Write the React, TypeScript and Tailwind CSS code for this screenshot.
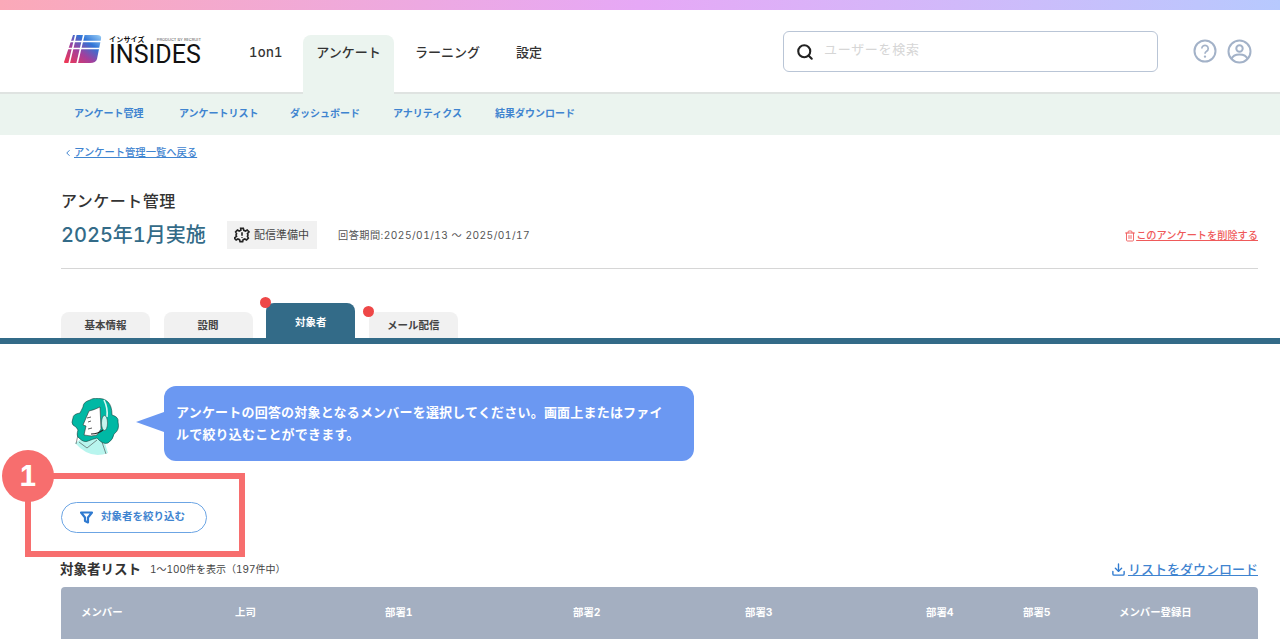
import { ChevronLeft, Download, Search, Trash2 } from "lucide-react";

const subNav = [
  { label: "アンケート管理", className: "w-[105px]" },
  { label: "アンケートリスト", className: "w-[111px]" },
  { label: "ダッシュボード", className: "w-[103px]" },
  { label: "アナリティクス", className: "w-[102px]" },
  { label: "結果ダウンロード", className: "w-[90px]" },
];

const columns = ["メンバー", "上司", "部署1", "部署2", "部署3", "部署4", "部署5", "メンバー登録日"];

const Logo = () => (
  <div className="flex items-center w-[188px] shrink-0 pb-[4px]">
    <svg width="38" height="29" viewBox="0 0 38 29" className="ml-[3px]">
      <defs>
        <linearGradient id="logoFill" x1="0" y1="1" x2="1" y2="0">
          <stop offset="0" stopColor="#f5364f" />
          <stop offset="0.4" stopColor="#a33f9c" />
          <stop offset="0.7" stopColor="#2f74d6" />
          <stop offset="1" stopColor="#9bd0f7" />
        </linearGradient>
      </defs>
      <path d="M9 0H33Q38 0 37 4L33 24Q32 28 26 28H1Q0 28 0 27Z" fill="url(#logoFill)" />
      <path d="M12 -1L5 29M20 -1L13 29" stroke="#fff" strokeWidth="1.6" />
      <path d="M6 6.5H38M4 13.5H38" stroke="#fff" strokeWidth="1.4" />
    </svg>
    <div className="ml-[7px] w-[92px]">
      <div className="flex items-center justify-between h-[9px] mb-[2px]">
        <span className="text-[7px] leading-[9px] font-bold tracking-[0.2px] text-[#111]">インサイズ</span>
        <span className="text-[4px] leading-[9px] text-[#555] whitespace-nowrap">PRODUCT BY RECRUIT</span>
      </div>
      <div className="text-[25px] leading-[18px] text-[#111] font-['Roboto',sans-serif]">INSIDES</div>
    </div>
  </div>
);

const Agent = () => (
  <svg width="50" height="60" viewBox="0 0 50 60" className="ml-[9px] mt-[12px] shrink-0">
    <path d="M5 45Q20 62 38 55L34 42L16 38Z" fill="#b8f5ee" />
    <path d="M6 46L9 32M36 56L30 38M9 44L17 50L27 42" fill="none" stroke="#444" strokeWidth="0.6" />
    <path
      d="M33 1Q24 -1 20 2Q13 4 13 9Q11 13 10 15Q3 16 3 20Q1 25 3 27Q7 29 8 32Q6 38 9 40Q14 45 18 43Q23 41 27 40Q33 47 38 45Q43 42 44 36Q50 32 48 24Q49 19 42 17Q42 8 38 4Q36 2 33 1Z"
      fill="#00b8a4"
      stroke="#16413c"
      strokeWidth="0.6"
    />
    <path d="M19 13Q24 12 30 9L31 31L27 37Q22 39 14 37L16 28L13 27Z" fill="#fff" stroke="#333" strokeWidth="0.6" />
    <path d="M17 20L21 19M18 24L21 23M18 31L22 30" stroke="#333" strokeWidth="0.8" />
    <path d="M34 2Q38 10 37 19" fill="none" stroke="#d8f8f4" strokeWidth="1.6" />
    <ellipse cx="34.5" cy="25" rx="3" ry="7.5" fill="#c6f5ef" stroke="#333" strokeWidth="0.5" />
    <path d="M33 32Q28 36 21 36" fill="none" stroke="#222" strokeWidth="1.1" />
  </svg>
);

export default function App() {
  return (
    <div className="relative h-[639px] w-[1280px] overflow-hidden bg-white text-[#333] tabular-nums font-['Inter','Noto_Sans_CJK_JP',sans-serif]">
      <div className="h-[10px] bg-gradient-to-r from-[#fba9b8] via-[#e6a8f6] to-[#b7c9fe]" />

      {/* Header */}
      <header className="flex h-[84px] items-stretch border-b-2 border-[#dfe3e1] pl-[61px] pr-[27px]">
        <Logo />
        <nav className="flex text-[13px] font-medium text-[#333]">
          <a className="flex items-center pt-[3px] w-[54px] tracking-[0.3px]">1on1</a>
          <a className="mt-[25px] mb-[-2px] flex w-[91px] justify-center rounded-t-lg bg-[#ebf4ef] pt-[8px]">アンケート</a>
          <a className="flex items-center pt-[3px] ml-[21px] w-[101px]">ラーニング</a>
          <a className="flex items-center pt-[3px]">設定</a>
        </nav>
        <div className="ml-[241px] mt-[21px] flex h-[41px] w-[375px] items-center rounded-md border border-[#b9c5d6] pl-[12px]">
          <Search className="h-[18px] w-[18px] text-[#222]" strokeWidth={2.8} />
          <span className="ml-[10px] pb-[3px] text-[13px] tracking-[0.7px] text-[#d6d6d6]">ユーザーを検索</span>
        </div>
        <div className="ml-[35px] flex items-center gap-[10px]">
          <svg width="24" height="24" viewBox="0 0 24 24" fill="none" stroke="#a3b2c8" strokeWidth="2">
            <circle cx="12" cy="12" r="10.5" />
            <path d="M8.8 9.500a3.200 3.200 0 1 1 4.800 2.800c-1 .6-1.600 1.200-1.600 2.400" strokeWidth="1.700" />
            <circle cx="12" cy="17.600" r="0.6" strokeWidth="1.200" />
          </svg>
          <svg width="25" height="25" viewBox="0 0 25 25" fill="none" stroke="#a3b2c8" strokeWidth="2">
            <circle cx="12.500" cy="12.500" r="11" />
            <circle cx="12.500" cy="9.500" r="3.200" />
            <path d="M4.500 20Q6 15.500 12.500 15.500T20.500 20" />
          </svg>
        </div>
      </header>

      {/* Sub navigation */}
      <div className="flex h-[41px] items-center bg-[#ebf4ef] pb-[3px] pl-[74px] text-[10px] font-bold text-[#3f84d0]">
        {subNav.map((item) => (
          <a key={item.label} className={`${item.className} whitespace-nowrap`}>
            {item.label}
          </a>
        ))}
      </div>

      <main className="pl-[61px] pr-[22px]">
        <div className="flex h-[35px] items-center text-[10.3px] font-medium text-[#3f84d0]">
          <ChevronLeft className="ml-[2px] mr-[1px] h-[10px] w-[10px]" strokeWidth={2.4} />
          <a className="underline">アンケート管理一覧へ戻る</a>
        </div>

        <h2 className="mt-[19px] text-[16px] leading-[24px] font-medium tracking-[0.5px] text-[#333]">アンケート管理</h2>
        <div className="mt-[8px] flex h-[28px] items-center">
          <span className="w-[166px] text-[20px] font-medium text-[#336b88]">2025年1月実施</span>
          <span className="flex h-[28px] w-[90px] items-center bg-[#f1f1f1] pl-[7px] text-[11px] text-[#444]">
            <svg width="16" height="16" viewBox="0 0 24 24" fill="none" stroke="#222" strokeWidth="2.4" className="mr-[4px]">
              <path d="M10 2h4l.7 3 2.500 1 2.600-1.500 2.800 2.800L20.100 10l.9 2-.9 2 1.500 2.700-2.800 2.800-2.600-1.500-2.500 1-.7 3h-4l-.7-3-2.500-1-2.600 1.500-2.800-2.800L3.900 14 3 12l.9-2-1.500-2.700 2.800-2.800 2.600 1.500 2.500-1z" />
              <path d="M12 8v5M12 15.500v1" />
            </svg>
            配信準備中
          </span>
          <span className="ml-[21px] pt-[2px] text-[10.200px] tracking-[0.45px] text-[#555]">回答期間:2025/01/13 〜 2025/01/17</span>
          <a className="ml-auto flex items-center pt-[2px] text-[10.200px] font-medium text-[#ef5a5a]">
            <Trash2 className="h-[12px] w-[12px]" strokeWidth={1.8} />
            <span className="underline">このアンケートを削除する</span>
          </a>
        </div>
        <div className="mt-[19px] h-px bg-[#d6d6d6]" />

        {/* Tabs */}
        <div className="mt-[34px] flex h-[35px] items-end gap-[13.6px] text-[10.500px] font-bold text-[#444]">
          <div className="flex h-[26px] w-[89px] items-center justify-center rounded-t-lg bg-[#f1f1f1] pt-[1px]">基本情報</div>
          <div className="flex h-[26px] w-[89px] items-center justify-center rounded-t-lg bg-[#f1f1f1] pt-[1px]">設問</div>
          <div className="relative flex h-[35px] w-[89px] items-center justify-center rounded-t-lg bg-[#336b88] pt-[4px] text-white">
            対象者
            <span className="absolute left-[-6px] top-[-6px] h-[11px] w-[11px] rounded-full bg-[#ee4747]" />
          </div>
          <div className="relative flex h-[26px] w-[89px] items-center justify-center rounded-t-lg bg-[#f1f1f1] pt-[1px]">
            メール配信
            <span className="absolute left-[-6px] top-[-6px] h-[11px] w-[11px] rounded-full bg-[#ee4747]" />
          </div>
        </div>
      </main>
      <div className="h-[6px] bg-[#336b88]" />

      <section className="pl-[61px] pr-[22px]">
        <div className="mt-[42px] flex items-start">
          <Agent />
          <div className="relative ml-[44px] flex h-[75px] w-[530px] items-center rounded-xl bg-[#6b98f2] px-[12px] pb-[2px] text-[13px] leading-[22px] font-bold tracking-[0.2px] text-white">
            <span className="absolute left-[-28px] top-[26px] h-0 w-0 border-y-[10px] border-r-[28px] border-y-transparent border-r-[#6b98f2]" />
            <p>
              アンケートの回答の対象となるメンバーを選択してください。画面上またはファイ
              <br />
              ルで絞り込むことができます。
            </p>
          </div>
        </div>

        <button className="mt-[41px] flex h-[31px] w-[146px] items-center rounded-full border border-[#6ca5e4] pb-[2px] pl-[18px] text-[10.500px] font-bold text-[#3f84d0]">
          <svg width="13" height="13" viewBox="0 0 13 13" fill="none" stroke="#2f7ad0" strokeWidth="2.200" className="mr-[8px] mt-[2px]">
            <path d="M1 1.500H12L8 6.500V11.500L5 10V6.500Z" strokeLinejoin="round" />
          </svg>
          対象者を絞り込む
        </button>

        <div className="mt-[25px] flex h-[22px] items-center">
          <h3 className="ml-[-1px] text-[13.500px] font-bold text-[#333]">対象者リスト</h3>
          <span className="ml-[9px] text-[10px] text-[#444]">1〜100件を表示（197件中）</span>
          <a className="ml-auto flex items-center pt-[1px] text-[13px] font-medium text-[#3f84d0]">
            <Download className="mr-[2px] h-[15px] w-[15px] text-[#2f7ad0]" strokeWidth={2.2} />
            <span className="underline">リストをダウンロード</span>
          </a>
        </div>

        <div className="mt-[7px] grid h-[54px] grid-cols-[154px_150px_188px_172px_181px_97px_96px_1fr] items-center rounded-t bg-[#a4afc1] pb-[3px] pl-[20px] text-[10.400px] font-bold text-white">
          {columns.map((column) => (
            <div key={column}>{column}</div>
          ))}
        </div>
      </section>

      {/* Annotation */}
      <div className="absolute left-[25px] top-[473px] h-[84px] w-[220px] border-[6px] border-[#f76e6e]" />
      <div className="absolute left-[2px] top-[450px] flex h-[52px] w-[52px] items-center justify-center rounded-full bg-[#f76e6e] text-[28px] font-bold text-white">
        1
      </div>
    </div>
  );
}
